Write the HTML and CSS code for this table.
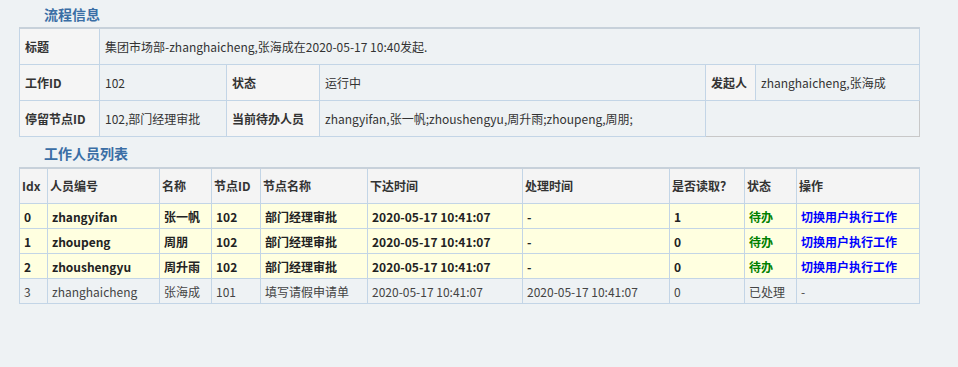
FILE: index.html
```html
<!DOCTYPE html>
<html lang="zh">
<head>
<meta charset="utf-8">
<title>流程信息</title>
<link rel="stylesheet" href="styles.css">
</head>
<body>
<div class="page">
  <h2 class="section-title first">流程信息</h2>
  <table class="info">
    <colgroup>
      <col class="w80"><col class="w127"><col class="w93"><col class="w386"><col class="w50"><col class="w164">
    </colgroup>
    <tr>
      <th>标题</th>
      <td colspan="5">集团市场部-zhanghaicheng,张海成在2020-05-17 10:40发起.</td>
    </tr>
    <tr>
      <th>工作ID</th>
      <td>102</td>
      <th>状态</th>
      <td>运行中</td>
      <th>发起人</th>
      <td>zhanghaicheng,张海成</td>
    </tr>
    <tr>
      <th>停留节点ID</th>
      <td>102,部门经理审批</td>
      <th>当前待办人员</th>
      <td>zhangyifan,张一帆;zhoushengyu,周升雨;zhoupeng,周朋;</td>
      <td colspan="2" class="empty"></td>
    </tr>
  </table>

  <h2 class="section-title second">工作人员列表</h2>
  <table class="list">
    <colgroup>
      <col class="c28"><col class="c112"><col class="c52"><col class="c49"><col class="c107"><col class="c155"><col class="c147"><col class="c75"><col class="c52"><col class="c123">
    </colgroup>
    <tr class="head">
      <th>Idx</th><th>人员编号</th><th>名称</th><th>节点ID</th><th>节点名称</th><th>下达时间</th><th>处理时间</th><th>是否读取？</th><th>状态</th><th>操作</th>
    </tr>
    <tr class="todo">
      <td>0</td><td>zhangyifan</td><td>张一帆</td><td>102</td><td>部门经理审批</td><td>2020-05-17 10:41:07</td><td>-</td><td>1</td><td class="st-todo">待办</td><td><a class="act" href="#">切换用户执行工作</a></td>
    </tr>
    <tr class="todo">
      <td>1</td><td>zhoupeng</td><td>周朋</td><td>102</td><td>部门经理审批</td><td>2020-05-17 10:41:07</td><td>-</td><td>0</td><td class="st-todo">待办</td><td><a class="act" href="#">切换用户执行工作</a></td>
    </tr>
    <tr class="todo">
      <td>2</td><td>zhoushengyu</td><td>周升雨</td><td>102</td><td>部门经理审批</td><td>2020-05-17 10:41:07</td><td>-</td><td>0</td><td class="st-todo">待办</td><td><a class="act" href="#">切换用户执行工作</a></td>
    </tr>
    <tr class="done">
      <td>3</td><td>zhanghaicheng</td><td>张海成</td><td>101</td><td>填写请假申请单</td><td>2020-05-17 10:41:07</td><td>2020-05-17 10:41:07</td><td>0</td><td>已处理</td><td>-</td>
    </tr>
  </table>
</div>
</body>
</html>
```

FILE: styles.css
```css
html, body {
  margin: 0;
  padding: 0;
  background: #eef2f4;
}
body {
  font-family: "Noto Sans CJK SC", "Noto Sans", sans-serif;
  font-size: 12px;
  color: #333;
}
.page {
  padding-left: 19px;
  width: 900px;
}
.section-title {
  margin: 0;
  padding-left: 25px;
  font-size: 14px;
  line-height: 20px;
  font-weight: bold;
  color: #3a6ea5;
}
.section-title.first {
  padding-top: 4px;
  padding-bottom: 3px;
}
.section-title.second {
  padding-top: 6px;
  padding-bottom: 4px;
}
table {
  border-collapse: collapse;
  table-layout: fixed;
  width: 900px;
}
table tr:first-child > * {
  border-top: 2px solid #c7d1da;
}
th, td {
  border: 1px solid #c3d5e6;
  text-align: left;
  vertical-align: middle;
  white-space: nowrap;
  overflow: hidden;
}
.info th, .info td {
  height: 36px;
  padding: 0 5px;
  box-sizing: border-box;
}
.info th {
  background: #f5f5f5;
  font-weight: bold;
  color: #333;
}
.info td.empty {
  border-right-color: #c8c8c8;
  border-bottom-color: #c8c8c8;
}
.w80 { width: 80px; }
.w127 { width: 127px; }
.w93 { width: 93px; }
.w386 { width: 386px; }
.w50 { width: 50px; }
.w164 { width: 164px; }

.c28 { width: 28px; }
.c112 { width: 112px; }
.c52 { width: 52px; }
.c49 { width: 49px; }
.c107 { width: 107px; }
.c155 { width: 155px; }
.c147 { width: 147px; }
.c75 { width: 75px; }
.c123 { width: 123px; }

.list th {
  height: 36px;
  padding: 0 2px;
  background: #f4f4f4;
  font-weight: bold;
  color: #333;
  box-sizing: border-box;
}
.list td {
  height: 25px;
  padding: 0 4px;
  box-sizing: border-box;
}
.list tr.todo td {
  background: #ffffe0;
  font-weight: bold;
  color: #222;
}
.list tr.done td {
  color: #444;
}
.list tr.todo td.st-todo {
  color: #008000;
}
.act {
  color: #0000ff;
  font-weight: bold;
  text-decoration: none;
}
```
